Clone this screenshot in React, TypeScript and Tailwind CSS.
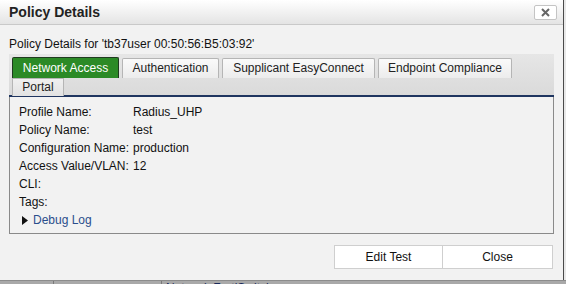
import { useState } from 'react';

const tabs: [string, string][] = [
  ['Network Access', 'w-[107px]'],
  ['Authentication', 'w-[97px]'],
  ['Supplicant EasyConnect', 'w-[153px]'],
  ['Endpoint Compliance', 'w-[134px]'],
];

const rows: [string, string][] = [
  ['Profile Name:', 'Radius_UHP'],
  ['Policy Name:', 'test'],
  ['Configuration Name:', 'production'],
  ['Access Value/VLAN:', '12'],
  ['CLI:', ''],
  ['Tags:', ''],
];

const Tab = ({ label, width, active, onClick }: { label: string; width: string; active: boolean; onClick: () => void }) => (
  <button
    onClick={onClick}
    className={
      active
        ? `${width} h-[21px] border border-[#1f3a1f] border-b-0 rounded-t-[2px] bg-[#2b8a26] text-white text-[12px] leading-[20px]`
        : `${width} h-[20px] border border-[#b5b5b5] border-b-0 rounded-t-[2px] bg-gradient-to-b from-[#fafafa] to-[#ececec] text-[#222] text-[12px] leading-[19px]`
    }
  >
    {label}
  </button>
);

export default function App() {
  const [active, setActive] = useState('Network Access');

  return (
    <div className="w-[566px] h-[284px] overflow-hidden bg-[#a9a9a9] font-['Liberation_Sans',Arial,sans-serif] flex flex-col">
      <div className="flex h-[280px]">
        {/* Dialog */}
        <div className="w-[564px] h-[280px] bg-[#f2f2f2] border-r border-[#4a4a4a] flex flex-col">
          {/* Title bar */}
          <div className="h-[25px] shrink-0 flex items-center justify-between pl-[9px] pr-[6px] bg-gradient-to-b from-white to-[#e4e4e4] border-b border-[#c9c9c9]">
            <span className="text-[14px] font-bold text-[#222]">Policy Details</span>
            <button className="w-[23px] h-[15px] mt-[1px] bg-white border border-[#c4c4c4] rounded-[2px] flex items-center justify-center">
              <svg width="9" height="9" viewBox="0 0 9 9">
                <path d="M1 1 L8 8 M8 1 L1 8" stroke="#666" strokeWidth="2" />
              </svg>
            </button>
          </div>

          {/* Body */}
          <div className="flex-1 flex flex-col px-[9px] pt-[10px]">
            <div className="text-[12px] text-[#111] h-[18px] leading-[18px]">
              Policy Details for 'tb37user 00:50:56:B5:03:92'
            </div>

            <div className="mt-[1px] w-[545px]">
              {/* Tab strip */}
              <div className="h-[43px] bg-gradient-to-b from-[#e6e6e6] to-[#dadada] border-b-2 border-[#1f3560] pl-[3px] pt-[3px] flex flex-col">
                <div className="flex items-end gap-x-[3px] h-[21px]">
                  {tabs.map(([t, w]) => (
                    <Tab key={t} label={t} width={w} active={active === t} onClick={() => setActive(t)} />
                  ))}
                </div>
                <div className="flex items-end h-[18px]">
                  <button
                    onClick={() => setActive('Portal')}
                    className={
                      active === 'Portal'
                        ? 'w-[52px] h-[18px] border border-[#1f3a1f] border-b-0 bg-[#2b8a26] text-white text-[12px] leading-[17px]'
                        : 'w-[52px] h-[18px] border border-[#b5b5b5] border-b-0 bg-gradient-to-b from-[#f0f0f0] to-[#e2e2e2] text-[#222] text-[12px] leading-[17px]'
                    }
                  >
                    Portal
                  </button>
                </div>
              </div>

              {/* Panel */}
              <div className="h-[137px] border border-t-0 border-[#8a8a8a] bg-[#f2f2f2] pl-[9px] pt-[6px]">
                {rows.map(([k, v]) => (
                  <div key={k} className="flex h-[18px] leading-[18px] text-[12px] text-[#111]">
                    <span className="w-[114px]">{k}</span>
                    <span>{v}</span>
                  </div>
                ))}
                <div className="flex items-center h-[18px] text-[12px] pl-[3px]">
                  <svg width="6" height="9" viewBox="0 0 6 9" className="mr-[5px]">
                    <path d="M0 0 L6 4.5 L0 9 Z" fill="#111" />
                  </svg>
                  <span className="text-[#2a4e8c]">Debug Log</span>
                </div>
              </div>
            </div>

            {/* Buttons */}
            <div className="flex justify-end mt-[11px] pr-[1px]">
              <button className="w-[109px] h-[24px] bg-white border border-[#cfcfcf] text-[12px] text-[#111]">
                Edit Test
              </button>
              <button className="w-[110px] h-[24px] bg-white border border-l-0 border-[#cfcfcf] text-[12px] text-[#111]">
                Close
              </button>
            </div>
          </div>
        </div>
        <div className="flex-1 bg-[#e8e8e8]" />
      </div>

      {/* Page behind the dialog */}
      <div className="flex-1 border-t border-[#8c8c8c] flex text-[12px] leading-[14px] text-[#1a2a5a]">
        <div className="w-[54px] border-r border-[#7a7a7a]" />
        <div className="w-[108px] border-r border-[#7a7a7a]" />
        <div className="w-[140px] pl-[4px] overflow-hidden">Network FortiSwitch</div>
      </div>
    </div>
  );
}
